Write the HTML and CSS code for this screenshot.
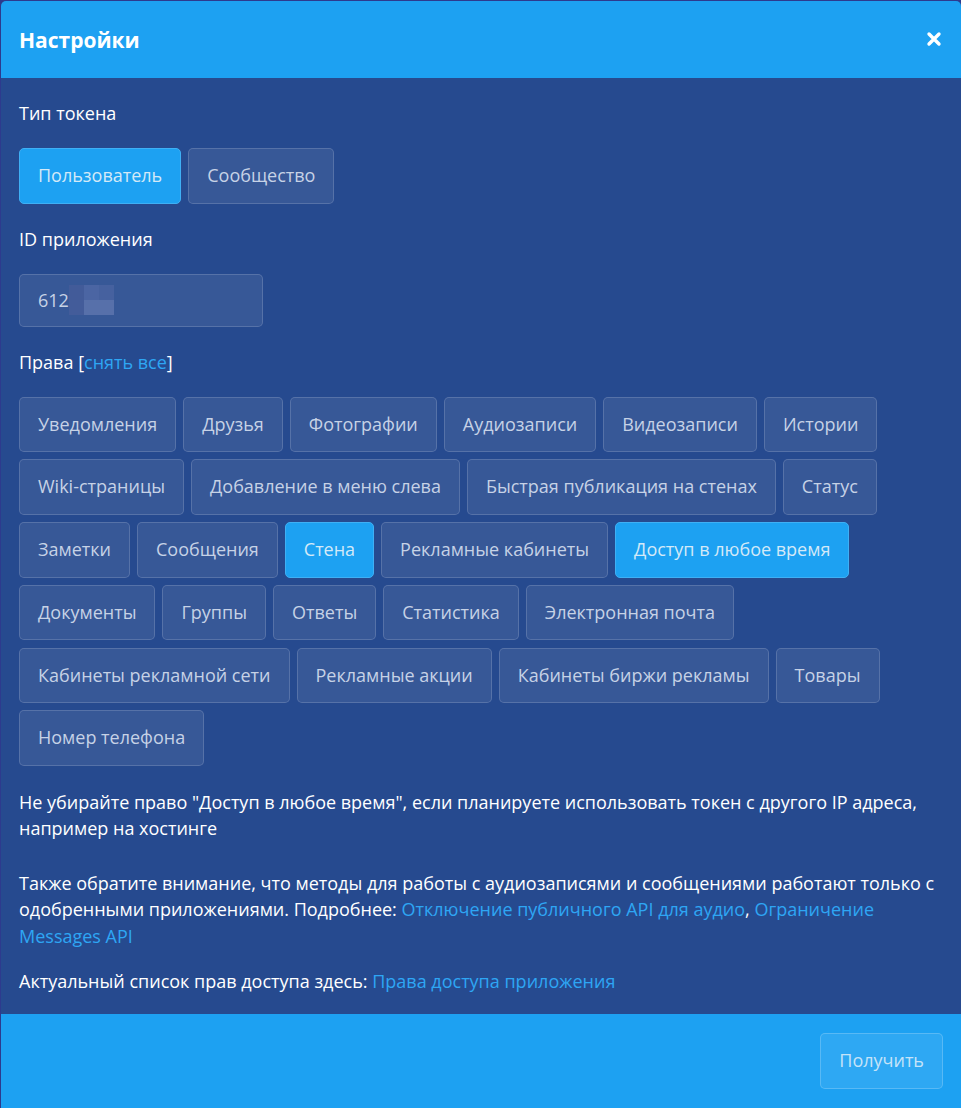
FILE: index.html
```html
<!DOCTYPE html>
<html lang="ru">
<head>
<meta charset="utf-8">
<title>Настройки</title>
<link rel="stylesheet" href="styles.css">
</head>
<body>
<div class="modal">
  <header class="modal-header">
    <h1 class="modal-title">Настройки</h1>
    <span class="close" aria-label="Закрыть">
      <svg width="16" height="16" viewBox="0 0 16 16"><path d="M3 3 L13 13 M13 3 L3 13" stroke="#fff" stroke-width="3.4" stroke-linecap="round"/></svg>
    </span>
  </header>
  <div class="modal-body">
    <div class="label">Тип токена</div>
    <div class="btn-row">
      <span class="btn active">Пользователь</span>
      <span class="btn">Сообщество</span>
    </div>
    <div class="label">ID приложения</div>
    <div class="input">
      <span class="input-text">612</span>
      <span class="pix">
        <i class="p1"></i><i class="p2"></i><i class="p3"></i>
        <i class="p4"></i><i class="p5"></i><i class="p6"></i>
      </span>
    </div>
    <div class="label">Права [<a class="link" href="#">снять все</a>]</div>
    <div class="tags">
      <span class="btn">Уведомления</span>
      <span class="btn">Друзья</span>
      <span class="btn">Фотографии</span>
      <span class="btn">Аудиозаписи</span>
      <span class="btn">Видеозаписи</span>
      <span class="btn">Истории</span>
      <span class="btn">Wiki-страницы</span>
      <span class="btn">Добавление в меню слева</span>
      <span class="btn">Быстрая публикация на стенах</span>
      <span class="btn">Статус</span>
      <span class="btn">Заметки</span>
      <span class="btn">Сообщения</span>
      <span class="btn active">Стена</span>
      <span class="btn">Рекламные кабинеты</span>
      <span class="btn active">Доступ в любое время</span>
      <span class="btn">Документы</span>
      <span class="btn">Группы</span>
      <span class="btn">Ответы</span>
      <span class="btn">Статистика</span>
      <span class="btn">Электронная почта</span>
      <span class="btn">Кабинеты рекламной сети</span>
      <span class="btn">Рекламные акции</span>
      <span class="btn">Кабинеты биржи рекламы</span>
      <span class="btn">Товары</span>
      <span class="btn">Номер телефона</span>
    </div>
    <p class="note n1">Не убирайте право "Доступ в любое время", если планируете использовать токен с другого IP адреса, например на хостинге</p>
    <p class="note n2">Также обратите внимание, что методы для работы с аудиозаписями и сообщениями работают только с одобренными приложениями. Подробнее: <a class="link" href="#">Отключение публичного API для аудио</a>, <a class="link" href="#">Ограничение Messages API</a></p>
    <p class="note n3">Актуальный список прав доступа здесь: <a class="link" href="#">Права доступа приложения</a></p>
  </div>
  <footer class="modal-footer">
    <span class="btn submit">Получить</span>
  </footer>
</div>
</body>
</html>
```

FILE: styles.css
```css
html, body {
  margin: 0;
  padding: 0;
}
body {
  background: #2d3a8e;
  font-family: "Open Sans", "Noto Sans", sans-serif;
  font-size: 18px;
  color: #ffffff;
  height: 1108px;
  overflow: hidden;
}
.modal {
  margin: 1px 0 0 1px;
  background: #264a8f;
  border-radius: 5px 5px 0 0;
  overflow: hidden;
  display: flex;
  flex-direction: column;
  height: 1107px;
}
.modal-header {
  background: #1da1f2;
  height: 77px;
  display: flex;
  align-items: center;
  justify-content: space-between;
  padding: 0 18px 0 18px;
  flex-shrink: 0;
}
.modal-title {
  margin: 0;
  font-size: 21px;
  font-weight: 700;
  color: #fff;
  line-height: 28px;
}
.close {
  display: flex;
  width: 16px;
  height: 16px;
  margin-top: -1px;
  margin-right: 1px;
}
.modal-body {
  flex: 1;
  padding: 23px 18px 0 18px;
}
.label {
  line-height: 24px;
  color: #fff;
}
.link {
  color: #2ea6f4;
  text-decoration: none;
}
.btn-row {
  display: flex;
  gap: 7px;
  margin: 23px 0 23px;
}
.btn {
  display: inline-block;
  box-sizing: border-box;
  height: 55.5px;
  padding: 0 18px;
  line-height: 53.5px;
  border: 1px solid rgba(255, 255, 255, 0.16);
  background: rgba(255, 255, 255, 0.08);
  border-radius: 5px;
  color: #c6d2e6;
  white-space: nowrap;
}
.btn.active {
  background: #1da1f2;
  border-color: #3fb0f5;
  color: #d3e9f8;
}
.input {
  margin: 23px 0 23px;
  box-sizing: border-box;
  width: 244px;
  height: 53px;
  border: 1px solid rgba(255, 255, 255, 0.16);
  background: rgba(255, 255, 255, 0.08);
  border-radius: 5px;
  padding: 0 18px;
  display: flex;
  align-items: center;
  color: #c6d2e6;
}
.input-text {
  line-height: 24px;
}
.pix {
  display: grid;
  grid-template-columns: 15px 15px 15px;
  grid-template-rows: 15px 15px;
}
.pix i { display: block; }
.pix .p1 { background: #425b99; }
.pix .p2 { background: #4b65a3; }
.pix .p3 { background: #46619f; }
.pix .p4 { background: #435c9a; }
.pix .p5 { background: #5770aa; }
.pix .p6 { background: #5770aa; }
.tags {
  display: flex;
  flex-wrap: wrap;
  gap: 7.3px 7px;
  margin-top: 23px;
  width: 900px;
}
.note {
  margin: 0;
  line-height: 26.5px;
  color: #fff;
}
.n1 { margin-top: 23px; }
.n2 { margin-top: 28px; }
.n3 { margin-top: 19px; }
.modal-footer {
  background: #1da1f2;
  height: 94px;
  box-sizing: border-box;
  padding: 19px 18px 0;
  display: flex;
  justify-content: flex-end;
  align-items: flex-start;
  flex-shrink: 0;
}
.btn.submit {
  background: rgba(255, 255, 255, 0.08);
  border-color: rgba(255, 255, 255, 0.2);
  color: #c5e3f8;
  padding: 0 18px;
}
```
